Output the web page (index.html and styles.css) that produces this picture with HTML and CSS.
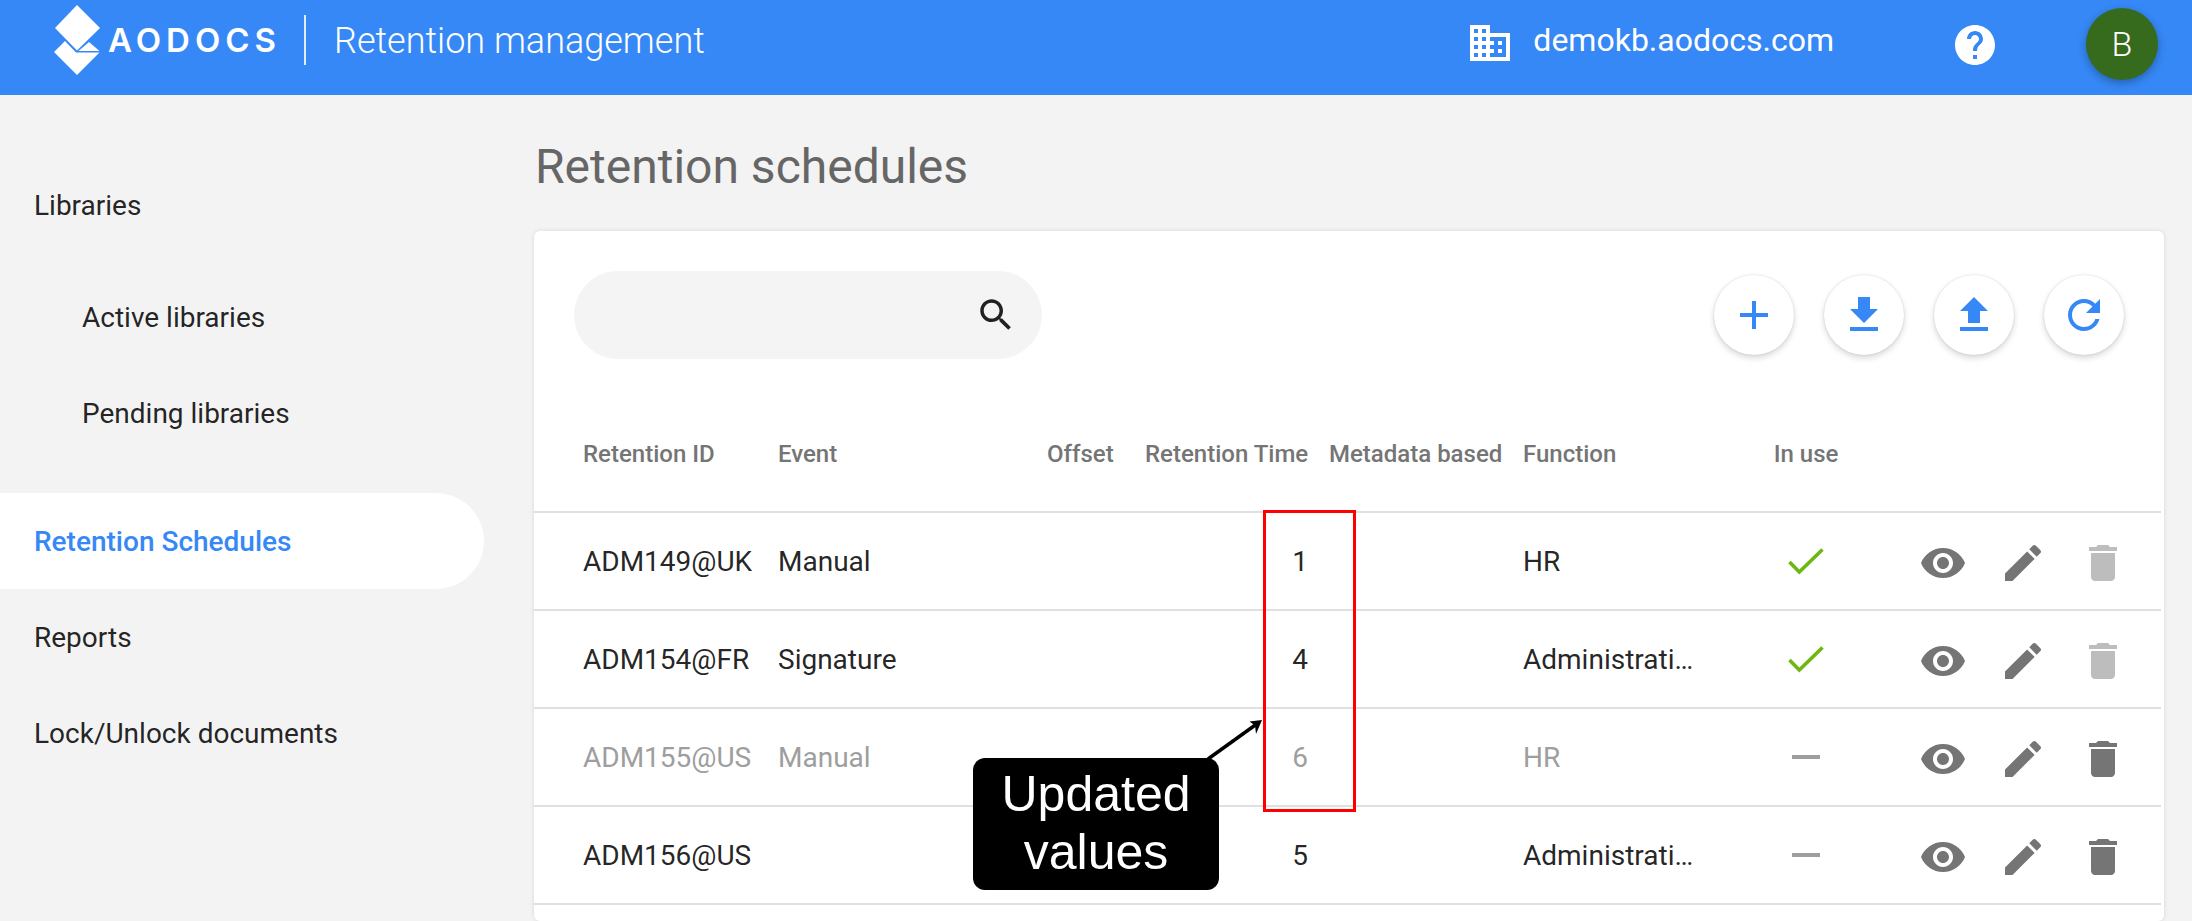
FILE: index.html
```html
<!DOCTYPE html>
<html lang="en">
<head>
<meta charset="utf-8">
<title>Retention management</title>
<link rel="stylesheet" href="styles.css">
</head>
<body>
<header class="topbar">
  <svg class="logo-mark" viewBox="54 4 46 72" aria-hidden="true">
    <polygon points="77,5 100,28 77,50.5 55,28"/>
    <polygon points="78.5,51 99.5,51 89,42"/>
    <polygon points="54,52 65,41 76,52.5 99.5,52.5 77,75"/>
  </svg>
  <span class="logo-word">AODOCS</span>
  <span class="divider"></span>
  <span class="app-title">Retention management</span>
  <svg class="domain-icon" viewBox="0 0 24 24"><path d="M12 7V3H2v18h20V7H12zM6 19H4v-2h2v2zm0-4H4v-2h2v2zm0-4H4V9h2v2zm0-4H4V5h2v2zm4 12H8v-2h2v2zm0-4H8v-2h2v2zm0-4H8V9h2v2zm0-4H8V5h2v2zm10 12h-8v-2h2v-2h-2v-2h2v-2h-2V9h8v10zm-2-8h-2v2h2v-2zm0 4h-2v2h2v-2z"/></svg>
  <span class="domain-name">demokb.aodocs.com</span>
  <svg class="help-icon" viewBox="0 0 24 24"><path d="M12 2C6.48 2 2 6.48 2 12s4.48 10 10 10 10-4.48 10-10S17.52 2 12 2zm1 17h-2v-2h2v2zm2.07-7.75l-.9.92C13.45 12.9 13 13.5 13 15h-2v-.5c0-1.1.45-2.1 1.17-2.83l1.24-1.26c.37-.36.59-.86.59-1.41 0-1.1-.9-2-2-2s-2 .9-2 2H8c0-2.21 1.79-4 4-4s4 1.79 4 4c0 .88-.36 1.68-.93 2.25z"/></svg>
  <span class="avatar">B</span>
</header>

<div class="layout">
  <nav class="sidebar">
    <a class="nav-item">Libraries</a>
    <div class="nav-group">
      <a class="nav-item nav-sub">Active libraries</a>
      <a class="nav-item nav-sub">Pending libraries</a>
    </div>
    <a class="nav-item nav-active">Retention Schedules</a>
    <a class="nav-item">Reports</a>
    <a class="nav-item">Lock/Unlock documents</a>
  </nav>

  <main class="content">
    <h1 class="page-title">Retention schedules</h1>
    <section class="card">
      <div class="toolbar">
        <div class="search">
          <svg class="search-icon" viewBox="0 0 24 24"><path d="M15.5 14h-.79l-.28-.27C15.41 12.59 16 11.11 16 9.5 16 5.91 13.09 3 9.5 3S3 5.91 3 9.5 5.91 16 9.5 16c1.61 0 3.09-.59 4.23-1.57l.27.28v.79l5 4.99L20.49 19l-4.99-5zm-6 0C7.01 14 5 11.99 5 9.5S7.01 5 9.5 5 14 7.01 14 9.5 11.99 14 9.5 14z"/></svg>
        </div>
        <div class="fabs">
          <span class="fab"><svg viewBox="0 0 24 24"><path d="M19 13h-6v6h-2v-6H5v-2h6V5h2v6h6v2z"/></svg></span>
          <span class="fab"><svg viewBox="0 0 24 24"><path d="M19 9h-4V3H9v6H5l7 7 7-7zM5 18v2h14v-2H5z"/></svg></span>
          <span class="fab"><svg viewBox="0 0 24 24"><path d="M9 16h6v-6h4l-7-7-7 7h4zm-4 2h14v2H5z"/></svg></span>
          <span class="fab"><svg viewBox="0 0 24 24"><path d="M17.65 6.35C16.2 4.9 14.21 4 12 4c-4.42 0-7.99 3.58-7.99 8s3.57 8 7.99 8c3.73 0 6.84-2.55 7.73-6h-2.08c-.82 2.33-3.04 4-5.65 4-3.31 0-6-2.69-6-6s2.69-6 6-6c1.66 0 3.14.69 4.22 1.78L13 11h7V4l-2.35 2.35z"/></svg></span>
        </div>
      </div>

      <div class="row head">
        <span>Retention ID</span><span>Event</span><span>Offset</span><span>Retention Time</span><span>Metadata based</span><span>Function</span><span class="in-use">In use</span><span></span>
      </div>

      <div class="row">
        <span>ADM149@UK</span><span>Manual</span><span></span><span class="num">1</span><span></span><span class="fn">HR</span>
        <span class="in-use"><svg class="check" viewBox="0 0 48 48"><polyline points="7.5,25 17.3,35 40.5,12.5"/></svg></span>
        <span class="actions">
          <svg viewBox="0 0 24 24"><path d="M12 4.5C7 4.5 2.73 7.61 1 12c1.73 4.39 6 7.5 11 7.5s9.27-3.11 11-7.5c-1.73-4.39-6-7.5-11-7.5zM12 17c-2.76 0-5-2.24-5-5s2.24-5 5-5 5 2.24 5 5-2.24 5-5 5zm0-8c-1.66 0-3 1.34-3 3s1.34 3 3 3 3-1.34 3-3-1.34-3-3-3z"/></svg>
          <svg viewBox="0 0 24 24"><path d="M3 17.25V21h3.75L17.81 9.94l-3.75-3.75L3 17.25zM20.71 7.04c.39-.39.39-1.02 0-1.41l-2.34-2.34c-.39-.39-1.02-.39-1.41 0l-1.83 1.83 3.75 3.75 1.83-1.83z"/></svg>
          <svg class="muted" viewBox="0 0 24 24"><path d="M6 19c0 1.1.9 2 2 2h8c1.1 0 2-.9 2-2V7H6v12zM19 4h-3.5l-1-1h-5l-1 1H5v2h14V4z"/></svg>
        </span>
      </div>

      <div class="row">
        <span>ADM154@FR</span><span>Signature</span><span></span><span class="num">4</span><span></span><span class="fn">Administrati…</span>
        <span class="in-use"><svg class="check" viewBox="0 0 48 48"><polyline points="7.5,25 17.3,35 40.5,12.5"/></svg></span>
        <span class="actions">
          <svg viewBox="0 0 24 24"><path d="M12 4.5C7 4.5 2.73 7.61 1 12c1.73 4.39 6 7.5 11 7.5s9.27-3.11 11-7.5c-1.73-4.39-6-7.5-11-7.5zM12 17c-2.76 0-5-2.24-5-5s2.24-5 5-5 5 2.24 5 5-2.24 5-5 5zm0-8c-1.66 0-3 1.34-3 3s1.34 3 3 3 3-1.34 3-3-1.34-3-3-3z"/></svg>
          <svg viewBox="0 0 24 24"><path d="M3 17.25V21h3.75L17.81 9.94l-3.75-3.75L3 17.25zM20.71 7.04c.39-.39.39-1.02 0-1.41l-2.34-2.34c-.39-.39-1.02-.39-1.41 0l-1.83 1.83 3.75 3.75 1.83-1.83z"/></svg>
          <svg class="muted" viewBox="0 0 24 24"><path d="M6 19c0 1.1.9 2 2 2h8c1.1 0 2-.9 2-2V7H6v12zM19 4h-3.5l-1-1h-5l-1 1H5v2h14V4z"/></svg>
        </span>
      </div>

      <div class="row inactive">
        <span>ADM155@US</span><span>Manual</span><span></span><span class="num">6</span><span></span><span class="fn">HR</span>
        <span class="in-use"><span class="dash"></span></span>
        <span class="actions">
          <svg viewBox="0 0 24 24"><path d="M12 4.5C7 4.5 2.73 7.61 1 12c1.73 4.39 6 7.5 11 7.5s9.27-3.11 11-7.5c-1.73-4.39-6-7.5-11-7.5zM12 17c-2.76 0-5-2.24-5-5s2.24-5 5-5 5 2.24 5 5-2.24 5-5 5zm0-8c-1.66 0-3 1.34-3 3s1.34 3 3 3 3-1.34 3-3-1.34-3-3-3z"/></svg>
          <svg viewBox="0 0 24 24"><path d="M3 17.25V21h3.75L17.81 9.94l-3.75-3.75L3 17.25zM20.71 7.04c.39-.39.39-1.02 0-1.41l-2.34-2.34c-.39-.39-1.02-.39-1.41 0l-1.83 1.83 3.75 3.75 1.83-1.83z"/></svg>
          <svg viewBox="0 0 24 24"><path d="M6 19c0 1.1.9 2 2 2h8c1.1 0 2-.9 2-2V7H6v12zM19 4h-3.5l-1-1h-5l-1 1H5v2h14V4z"/></svg>
        </span>
      </div>

      <div class="row">
        <span>ADM156@US</span><span></span><span></span><span class="num">5</span><span></span><span class="fn">Administrati…</span>
        <span class="in-use"><span class="dash"></span></span>
        <span class="actions">
          <svg viewBox="0 0 24 24"><path d="M12 4.5C7 4.5 2.73 7.61 1 12c1.73 4.39 6 7.5 11 7.5s9.27-3.11 11-7.5c-1.73-4.39-6-7.5-11-7.5zM12 17c-2.76 0-5-2.24-5-5s2.24-5 5-5 5 2.24 5 5-2.24 5-5 5zm0-8c-1.66 0-3 1.34-3 3s1.34 3 3 3 3-1.34 3-3-1.34-3-3-3z"/></svg>
          <svg viewBox="0 0 24 24"><path d="M3 17.25V21h3.75L17.81 9.94l-3.75-3.75L3 17.25zM20.71 7.04c.39-.39.39-1.02 0-1.41l-2.34-2.34c-.39-.39-1.02-.39-1.41 0l-1.83 1.83 3.75 3.75 1.83-1.83z"/></svg>
          <svg viewBox="0 0 24 24"><path d="M6 19c0 1.1.9 2 2 2h8c1.1 0 2-.9 2-2V7H6v12zM19 4h-3.5l-1-1h-5l-1 1H5v2h14V4z"/></svg>
        </span>
      </div>
    </section>
  </main>
</div>

<div class="highlight-box"></div>
<svg class="callout-arrow" viewBox="0 0 60 44" aria-hidden="true">
  <line x1="2" y1="41" x2="50" y2="6.5"/>
  <polygon points="56,2 43.5,3.5 49,7.5 50,16"/>
</svg>
<div class="callout">Updated<br>values</div>
</body>
</html>
```

FILE: styles.css
```css
* { box-sizing: border-box; }

html, body {
  margin: 0;
  height: 921px;
  overflow: hidden;
}

body {
  position: relative;
  background: #f3f3f3;
  font-family: Roboto, "Liberation Sans", sans-serif;
  color: rgba(0, 0, 0, 0.87);
}

.topbar {
  height: 95px;
  display: flex;
  align-items: center;
  padding: 0 34px 15px 54px;
  background: #3688f6;
  color: #fff;
}

.logo-mark {
  width: 46px;
  height: 72px;
  fill: #fff;
  flex: none;
}

.logo-word {
  margin-left: 8px;
  font-family: Inter, sans-serif;
  font-weight: 600;
  font-size: 33px;
  letter-spacing: 5px;
}

.divider {
  width: 2px;
  height: 50px;
  margin-left: 23px;
  background: rgba(255, 255, 255, 0.85);
}

.app-title {
  margin-left: 28px;
  margin-top: 2px;
  font-weight: 300;
  font-size: 36px;
  flex: 1;
}

.domain-icon, .help-icon {
  width: 48px;
  height: 48px;
  fill: #fff;
  flex: none;
}

.domain-icon {
  margin-top: 6px;
}

.help-icon {
  margin-top: 9px;
}

.domain-name {
  margin-left: 19px;
  margin-right: 117px;
  font-size: 32px;
}

.avatar {
  width: 72px;
  height: 72px;
  margin-top: 8px;
  margin-left: 87px;
  border-radius: 50%;
  display: flex;
  align-items: center;
  justify-content: center;
  background: #366a1c;
  font-size: 34px;
  font-weight: 300;
  box-shadow: 0 3px 8px rgba(0, 0, 0, 0.3);
}

.layout {
  display: flex;
}

.sidebar {
  width: 484px;
  flex: none;
  padding-top: 62px;
  font-size: 28px;
}

.nav-item {
  display: flex;
  align-items: center;
  height: 96px;
  padding-left: 34px;
}

.nav-group {
  margin: 16px 0 32px;
}

.nav-sub {
  padding-left: 82px;
}

.nav-active {
  background: #fff;
  border-radius: 0 48px 48px 0;
  color: #3688f6;
  font-weight: 500;
}

.content {
  flex: 1;
  margin-left: 50px;
  margin-right: 28px;
  min-width: 0;
}

.page-title {
  margin: 40px 0 32px 1px;
  font-weight: 400;
  font-size: 48px;
  line-height: 64px;
  color: #666;
}

.card {
  height: 690px;
  padding-top: 40px;
  background: #fff;
  border-radius: 6px;
  box-shadow: 0 0 4px rgba(0, 0, 0, 0.12);
}

.toolbar {
  display: flex;
  justify-content: space-between;
  align-items: center;
  padding: 0 40px;
}

.search {
  width: 468px;
  height: 88px;
  padding-right: 25px;
  display: flex;
  justify-content: flex-end;
  align-items: center;
  border-radius: 44px;
  background: #f4f4f4;
}

.search-icon {
  width: 42px;
  height: 42px;
  fill: #212121;
}

.fabs {
  display: flex;
  gap: 30px;
}

.fab {
  width: 80px;
  height: 80px;
  border-radius: 50%;
  display: flex;
  align-items: center;
  justify-content: center;
  background: #fff;
  box-shadow: 0 3px 6px rgba(0, 0, 0, 0.16), 0 0 2px rgba(0, 0, 0, 0.14);
}

.fab svg {
  width: 48px;
  height: 48px;
  fill: #3688f6;
}

.row {
  display: grid;
  grid-template-columns: 195px 269px 98px 184px 194px 250px 146px 1fr;
  align-items: center;
  height: 98px;
  margin-right: 3px;
  padding-left: 49px;
  border-bottom: 2px solid #e0e0e0;
  font-size: 28px;
}

.head {
  height: 107px;
  margin-top: 47px;
  padding-bottom: 10px;
  font-size: 24px;
  font-weight: 500;
  color: #757575;
  white-space: nowrap;
}

.inactive {
  color: #9e9e9e;
}

.num {
  text-align: right;
  padding-right: 21px;
}

.fn {
  white-space: nowrap;
}

.in-use {
  width: 66px;
  display: flex;
  justify-content: center;
  align-items: center;
}

.check {
  width: 48px;
  height: 48px;
  flex: none;
  fill: none;
  stroke: #6cb80f;
  stroke-width: 3.6;
}

.dash {
  width: 28px;
  height: 4px;
  background: #9e9e9e;
}

.actions {
  display: flex;
  gap: 32px;
  padding-top: 4px;
}

.actions svg {
  width: 48px;
  height: 48px;
  flex: none;
  fill: #757575;
}

.actions .muted {
  fill: #bdbdbd;
}

.highlight-box {
  position: absolute;
  left: 1263px;
  top: 510px;
  width: 93px;
  height: 302px;
  border: 3px solid #f00;
}

.callout-arrow {
  position: absolute;
  left: 1206px;
  top: 718px;
  width: 60px;
  height: 44px;
  stroke: #000;
  stroke-width: 3.5;
}

.callout-arrow polygon {
  stroke: none;
}

.callout {
  position: absolute;
  left: 973px;
  top: 758px;
  width: 246px;
  height: 132px;
  padding-top: 7px;
  border-radius: 12px;
  background: #000;
  color: #fff;
  font-family: "Liberation Sans", Arial, sans-serif;
  font-size: 50px;
  line-height: 58px;
  text-align: center;
}
```
